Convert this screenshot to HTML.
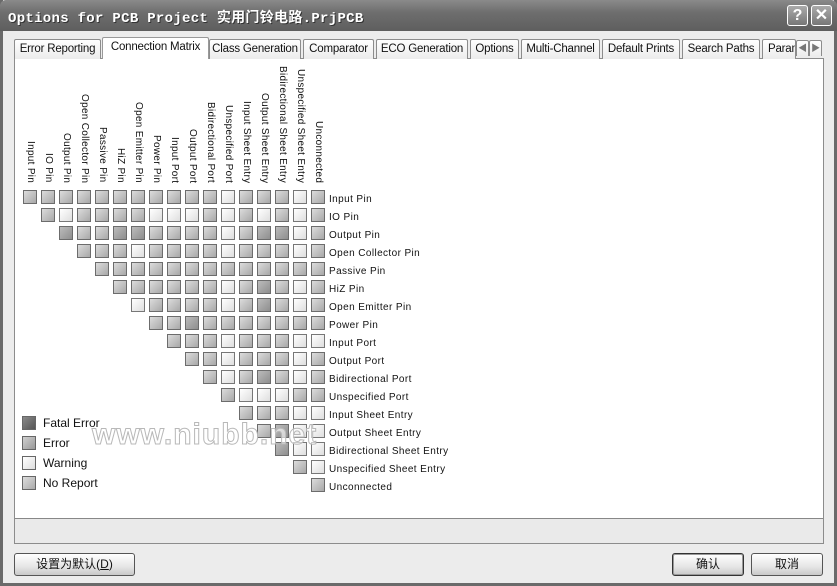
<!DOCTYPE html>
<html><head><meta charset="utf-8">
<style>
*{margin:0;padding:0;box-sizing:border-box}
body{width:837px;height:586px;overflow:hidden;background:#ececec;font-family:"Liberation Sans","Noto Sans CJK SC",sans-serif;position:relative}
.win{position:absolute;left:0;top:0;width:837px;height:586px;border:3px solid #6a6a6a;border-top:none;background:#ececec}
.title{position:absolute;left:0;top:0;width:837px;height:31px;background:linear-gradient(#8a8a8a,#6e6e6e 40%,#5e5e5e);border-radius:6px 6px 0 0}
.title span{position:absolute;left:8px;top:7px;color:#fff;font:bold 14px "Liberation Mono","Noto Sans CJK SC",monospace;text-shadow:1px 1px 0 #333;letter-spacing:.3px}
.tb{position:absolute;top:5px;width:21px;height:21px;border:1px solid #fff;border-radius:3px;background:linear-gradient(#aaa,#777);color:#fff;font:bold 16px "Liberation Sans",sans-serif;text-align:center;line-height:19px}
.tab{position:absolute;top:39px;height:20px;border:1px solid #8c8c8c;border-bottom:none;background:linear-gradient(#fff,#ececec);font-size:11.5px;letter-spacing:-.2px;color:#111;text-align:center;line-height:18px;border-radius:2px 2px 0 0;white-space:nowrap;overflow:hidden}
.panel{position:absolute;left:14px;top:58px;width:810px;height:486px;border:1px solid #8c8c8c;background:#fff}
.status{position:absolute;left:0;top:459px;width:808px;height:25px;background:#eaeaea;border-top:1px solid #888}
.row{position:absolute;display:flex;height:14px}
.row i{display:block;width:14px;height:14px;margin-right:4px;border:1px solid #6c6c6c;background:linear-gradient(135deg,#dcdcdc,#a8a8a8)}
.row i.w{background:linear-gradient(135deg,#fff,#dedede);border-color:#777}
.row i.d{background:linear-gradient(135deg,#bcbcbc,#8e8e8e)}
.vl{position:absolute;bottom:403px;writing-mode:vertical-rl;font-size:10px;color:#111;letter-spacing:.3px;line-height:12px;white-space:nowrap}
.rl{position:absolute;left:329px;font-size:10px;color:#111;letter-spacing:.4px;line-height:12px;white-space:nowrap}
.lg{position:absolute;left:22px;width:14px;height:14px;border:1px solid #666}
.lt{position:absolute;left:43px;font-size:12px;color:#111;line-height:14px}
.btn{position:absolute;top:553px;height:23px;border:1px solid #555;border-radius:3px;background:linear-gradient(#fff,#e6e6e6 60%,#c8c8c8);font-size:12px;text-align:center;line-height:21px;color:#111}
.wm{position:absolute;left:92px;top:418px;font:bold 30px "Liberation Sans",sans-serif;color:rgba(255,255,255,.6);-webkit-text-stroke:1px #b8b8b8;letter-spacing:1px}
</style></head><body>
<div class="win"></div>
<div class="title"><span>Options for PCB Project 实用门铃电路.PrjPCB</span>
<div class="tb" style="left:787px">?</div><div class="tb" style="left:811px">✕</div></div>

<div class="panel">
<div class="status"></div>
</div>

<div class="tab" style="left:14px;width:87px">Error Reporting</div>
<div class="tab" style="left:102px;top:37px;height:22px;width:107px;background:#fff;border-color:#999">Connection Matrix</div>
<div class="tab" style="left:209px;width:92px">Class Generation</div>
<div class="tab" style="left:303px;width:71px">Comparator</div>
<div class="tab" style="left:376px;width:92px">ECO Generation</div>
<div class="tab" style="left:470px;width:49px">Options</div>
<div class="tab" style="left:521px;width:79px">Multi-Channel</div>
<div class="tab" style="left:602px;width:78px">Default Prints</div>
<div class="tab" style="left:682px;width:78px">Search Paths</div>
<div class="tab" style="left:762px;width:34px;text-align:left;padding-left:5px">Parameters</div>
<div class="tab" style="left:796px;top:40px;height:16px;width:13px;font-size:9px;line-height:14px;color:#777">◀</div>
<div class="tab" style="left:809px;top:40px;height:16px;width:13px;font-size:9px;line-height:14px;color:#777">▶</div>

<div class="vl" style="left:24px">Input Pin</div>
<div class="vl" style="left:42px">IO Pin</div>
<div class="vl" style="left:60px">Output Pin</div>
<div class="vl" style="left:78px">Open Collector Pin</div>
<div class="vl" style="left:96px">Passive Pin</div>
<div class="vl" style="left:114px">HiZ Pin</div>
<div class="vl" style="left:132px">Open Emitter Pin</div>
<div class="vl" style="left:150px">Power Pin</div>
<div class="vl" style="left:168px">Input Port</div>
<div class="vl" style="left:186px">Output Port</div>
<div class="vl" style="left:204px">Bidirectional Port</div>
<div class="vl" style="left:222px">Unspecified Port</div>
<div class="vl" style="left:240px">Input Sheet Entry</div>
<div class="vl" style="left:258px">Output Sheet Entry</div>
<div class="vl" style="left:276px">Bidirectional Sheet Entry</div>
<div class="vl" style="left:294px">Unspecified Sheet Entry</div>
<div class="vl" style="left:312px">Unconnected</div>

<div class="row" style="left:23px;top:190px"><i></i><i></i><i></i><i></i><i></i><i></i><i></i><i></i><i></i><i></i><i></i><i class="w"></i><i></i><i></i><i></i><i class="w"></i><i></i></div>
<div class="row" style="left:41px;top:208px"><i></i><i class="w"></i><i></i><i></i><i></i><i></i><i class="w"></i><i class="w"></i><i class="w"></i><i></i><i class="w"></i><i></i><i class="w"></i><i></i><i class="w"></i><i></i></div>
<div class="row" style="left:59px;top:226px"><i class="d"></i><i></i><i></i><i class="d"></i><i class="d"></i><i></i><i></i><i></i><i></i><i class="w"></i><i></i><i class="d"></i><i class="d"></i><i class="w"></i><i></i></div>
<div class="row" style="left:77px;top:244px"><i></i><i></i><i></i><i class="w"></i><i></i><i></i><i></i><i></i><i class="w"></i><i></i><i></i><i></i><i class="w"></i><i></i></div>
<div class="row" style="left:95px;top:262px"><i></i><i></i><i></i><i></i><i></i><i></i><i></i><i></i><i></i><i></i><i></i><i></i><i></i></div>
<div class="row" style="left:113px;top:280px"><i></i><i></i><i></i><i></i><i></i><i></i><i class="w"></i><i></i><i class="d"></i><i></i><i class="w"></i><i></i></div>
<div class="row" style="left:131px;top:298px"><i class="w"></i><i></i><i></i><i></i><i></i><i class="w"></i><i></i><i class="d"></i><i></i><i class="w"></i><i></i></div>
<div class="row" style="left:149px;top:316px"><i></i><i></i><i class="d"></i><i></i><i></i><i></i><i></i><i></i><i></i><i></i></div>
<div class="row" style="left:167px;top:334px"><i></i><i></i><i></i><i class="w"></i><i></i><i></i><i></i><i class="w"></i><i class="w"></i></div>
<div class="row" style="left:185px;top:352px"><i></i><i></i><i class="w"></i><i></i><i></i><i></i><i class="w"></i><i></i></div>
<div class="row" style="left:203px;top:370px"><i></i><i class="w"></i><i></i><i class="d"></i><i></i><i class="w"></i><i></i></div>
<div class="row" style="left:221px;top:388px"><i></i><i class="w"></i><i class="w"></i><i class="w"></i><i></i><i></i></div>
<div class="row" style="left:239px;top:406px"><i></i><i></i><i></i><i class="w"></i><i class="w"></i></div>
<div class="row" style="left:257px;top:424px"><i></i><i class="d"></i><i class="w"></i><i class="w"></i></div>
<div class="row" style="left:275px;top:442px"><i class="d"></i><i class="w"></i><i class="w"></i></div>
<div class="row" style="left:293px;top:460px"><i></i><i class="w"></i></div>
<div class="row" style="left:311px;top:478px"><i></i></div>

<div class="rl" style="top:194px">Input Pin</div>
<div class="rl" style="top:212px">IO Pin</div>
<div class="rl" style="top:230px">Output Pin</div>
<div class="rl" style="top:248px">Open Collector Pin</div>
<div class="rl" style="top:266px">Passive Pin</div>
<div class="rl" style="top:284px">HiZ Pin</div>
<div class="rl" style="top:302px">Open Emitter Pin</div>
<div class="rl" style="top:320px">Power Pin</div>
<div class="rl" style="top:338px">Input Port</div>
<div class="rl" style="top:356px">Output Port</div>
<div class="rl" style="top:374px">Bidirectional Port</div>
<div class="rl" style="top:392px">Unspecified Port</div>
<div class="rl" style="top:410px">Input Sheet Entry</div>
<div class="rl" style="top:428px">Output Sheet Entry</div>
<div class="rl" style="top:446px">Bidirectional Sheet Entry</div>
<div class="rl" style="top:464px">Unspecified Sheet Entry</div>
<div class="rl" style="top:482px">Unconnected</div>

<div class="lg" style="top:416px;background:linear-gradient(135deg,#8a8a8a,#555)"></div><div class="lt" style="top:416px">Fatal Error</div>
<div class="lg" style="top:436px;background:linear-gradient(135deg,#d0d0d0,#999)"></div><div class="lt" style="top:436px">Error</div>
<div class="lg" style="top:456px;background:linear-gradient(135deg,#fff,#ddd)"></div><div class="lt" style="top:456px">Warning</div>
<div class="lg" style="top:476px;background:linear-gradient(135deg,#ddd,#aaa)"></div><div class="lt" style="top:476px">No Report</div>

<div class="wm">www.niubb.net</div>

<div class="btn" style="left:14px;width:121px">设置为默认(<u>D</u>)</div>
<div class="btn" style="left:672px;width:72px;border-color:#333;box-shadow:inset 0 0 0 1px #999">确认</div>
<div class="btn" style="left:751px;width:72px">取消</div>
</body></html>
